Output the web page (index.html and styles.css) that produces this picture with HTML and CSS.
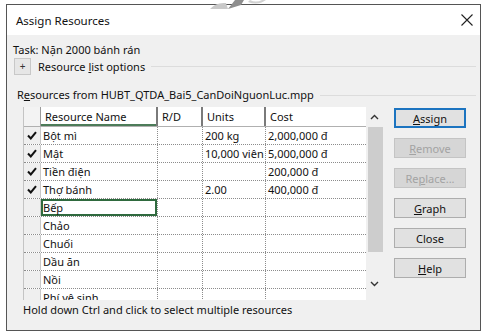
FILE: index.html
```html
<!DOCTYPE html>
<html lang="vi">
<head>
    <meta charset="UTF-8">
    <meta name="viewport" content="width=device-width, initial-scale=1.0">
    <title>Assign Resources</title>
    <link rel="stylesheet" href="styles.css">
</head>
<body>
    <svg class="watermark" width="60" height="9" viewBox="0 0 60 9">
        <path d="M2 9 Q8 2 18 3 L20 9 Z" fill="#c9c9c9"/>
        <path d="M20 9 L27 0 L36 0 L33 5 Z" fill="#8e8e8e"/>
        <path d="M40 2 Q50 6 58 0 L54 0 Q48 3 42 0 Z" fill="#d2d2d2"/>
    </svg>
    <div class="window">
        <div class="titlebar">
            <span class="title">Assign Resources</span>
            <svg class="close" width="12" height="12" viewBox="0 0 12 12">
                <path d="M0.5 0.5 L11.5 11.5 M11.5 0.5 L0.5 11.5" stroke="#222" stroke-width="1.1" fill="none"/>
            </svg>
        </div>
        <div class="content">
            <div class="task">Task: Nặn 2000 bánh rán</div>
            <div class="options">
                <span class="plus">+</span>
                <span class="options-label">Resource <u>l</u>ist options</span>
                <span class="rule"></span>
            </div>
            <div class="source">
                <span>R<u>e</u>sources from HUBT_QTDA_Bai5_CanDoiNguonLuc.mpp</span>
                <span class="rule"></span>
            </div>
            <div class="main">
                <div class="grid-wrap">
                    <div class="grid">
                        <div class="row head">
                            <div class="cell check"></div>
                            <div class="cell name">Resource Name</div>
                            <div class="cell">R/D</div>
                            <div class="cell">Units</div>
                            <div class="cell last">Cost</div>
                        </div>
                        <div class="row">
                            <div class="cell check"><svg width="10" height="9" viewBox="0 0 10 9"><path d="M1 4.5 L3.8 7.5 L9 1.2" stroke="#111" stroke-width="2" fill="none"/></svg></div>
                            <div class="cell">Bột mì</div>
                            <div class="cell"></div>
                            <div class="cell">200 kg</div>
                            <div class="cell last">2,000,000 đ</div>
                        </div>
                        <div class="row">
                            <div class="cell check"><svg width="10" height="9" viewBox="0 0 10 9"><path d="M1 4.5 L3.8 7.5 L9 1.2" stroke="#111" stroke-width="2" fill="none"/></svg></div>
                            <div class="cell">Mật</div>
                            <div class="cell"></div>
                            <div class="cell">10,000 viên</div>
                            <div class="cell last">5,000,000 đ</div>
                        </div>
                        <div class="row">
                            <div class="cell check"><svg width="10" height="9" viewBox="0 0 10 9"><path d="M1 4.5 L3.8 7.5 L9 1.2" stroke="#111" stroke-width="2" fill="none"/></svg></div>
                            <div class="cell">Tiền điện</div>
                            <div class="cell"></div>
                            <div class="cell"></div>
                            <div class="cell last">200,000 đ</div>
                        </div>
                        <div class="row">
                            <div class="cell check"><svg width="10" height="9" viewBox="0 0 10 9"><path d="M1 4.5 L3.8 7.5 L9 1.2" stroke="#111" stroke-width="2" fill="none"/></svg></div>
                            <div class="cell">Thợ bánh</div>
                            <div class="cell"></div>
                            <div class="cell">2.00</div>
                            <div class="cell last">400,000 đ</div>
                        </div>
                        <div class="row">
                            <div class="cell check"></div>
                            <div class="cell selected">Bếp</div>
                            <div class="cell"></div>
                            <div class="cell"></div>
                            <div class="cell last"></div>
                        </div>
                        <div class="row">
                            <div class="cell check"></div>
                            <div class="cell">Chảo</div>
                            <div class="cell"></div>
                            <div class="cell"></div>
                            <div class="cell last"></div>
                        </div>
                        <div class="row">
                            <div class="cell check"></div>
                            <div class="cell">Chuối</div>
                            <div class="cell"></div>
                            <div class="cell"></div>
                            <div class="cell last"></div>
                        </div>
                        <div class="row">
                            <div class="cell check"></div>
                            <div class="cell">Dầu ăn</div>
                            <div class="cell"></div>
                            <div class="cell"></div>
                            <div class="cell last"></div>
                        </div>
                        <div class="row">
                            <div class="cell check"></div>
                            <div class="cell">Nồi</div>
                            <div class="cell"></div>
                            <div class="cell"></div>
                            <div class="cell last"></div>
                        </div>
                        <div class="row partial">
                            <div class="cell check"></div>
                            <div class="cell">Phí vệ sinh</div>
                            <div class="cell"></div>
                            <div class="cell"></div>
                            <div class="cell last"></div>
                        </div>
                    </div>
                    <div class="scrollbar">
                        <div class="arrow">
                            <svg width="9" height="6" viewBox="0 0 9 6"><path d="M1 5 L4.5 1.5 L8 5" stroke="#333" stroke-width="1.4" fill="none"/></svg>
                        </div>
                        <div class="thumb"></div>
                        <div class="track"></div>
                        <div class="arrow down">
                            <svg width="9" height="6" viewBox="0 0 9 6"><path d="M1 1 L4.5 4.5 L8 1" stroke="#333" stroke-width="1.4" fill="none"/></svg>
                        </div>
                    </div>
                </div>
                <div class="buttons">
                    <button class="btn default"><u>A</u>ssign</button>
                    <button class="btn" disabled><u>R</u>emove</button>
                    <button class="btn" disabled>Re<u>p</u>lace...</button>
                    <button class="btn"><u>G</u>raph</button>
                    <button class="btn">Close</button>
                    <button class="btn"><u>H</u>elp</button>
                </div>
            </div>
            <div class="hint">Hold down Ctrl and click to select multiple resources</div>
        </div>
    </div>
</body>
</html>
```

FILE: styles.css
```css
body {
    margin: 0;
    background-color: #ffffff;
    font-family: "Noto Sans", "Open Sans", sans-serif;
    font-size: 11px;
    color: #111;
}

.watermark {
    position: absolute;
    left: 208px;
    top: 0;
}

.window {
    margin: 4px 0 0 6px;
    width: 473px;
    height: 325px;
    border: 1px solid #555;
    background-color: #f0f0f0;
    display: flex;
    flex-direction: column;
}

.titlebar {
    height: 30px;
    background-color: #fff;
    display: flex;
    align-items: center;
    justify-content: space-between;
    padding: 0 7px 0 9px;
}

.title {
    font-size: 11.5px;
}

.content {
    padding: 7px 0 0 6px;
    display: flex;
    flex-direction: column;
}

.task {
    line-height: 16px;
}

.options {
    display: flex;
    align-items: center;
    height: 17px;
    margin-left: 1px;
}

.plus {
    width: 15px;
    height: 15px;
    border: 1px solid #c8c8c8;
    background-color: #e6e6e6;
    font-size: 10px;
    line-height: 15px;
    text-align: center;
    color: #333;
}

.options-label {
    margin-left: 7px;
}

.rule {
    flex: 1;
    height: 1px;
    background-color: #dcdcdc;
    margin: 0 4px 0 6px;
}

.source {
    display: flex;
    align-items: center;
    line-height: 16px;
    margin: 12px 0 0 4px;
}

.main {
    display: flex;
    margin: 4px 0 0 10px;
}

.grid-wrap {
    display: flex;
    width: 359px;
    height: 193px;
    overflow: hidden;
    background-color: #fff;
    border-left: 1px solid #c4c4c4;
}

.grid {
    width: 342px;
}

.row {
    display: grid;
    grid-template-columns: 17px 117px 45px 63px 100px;
    height: 18px;
    border-bottom: 1px dotted #8c8c8c;
    box-sizing: border-box;
}

.row.head {
    height: 20px;
    border-bottom: 1px solid #b0b0b0;
}

.row.partial {
    height: 12px;
    border-bottom: none;
}

.cell {
    border-right: 1px dotted #8c8c8c;
    padding-left: 2px;
    line-height: 17px;
    white-space: nowrap;
    overflow: hidden;
}

.cell.last {
    border-right: none;
}

.head .cell {
    border-right: 2px solid #7a7a7a;
    line-height: 19px;
    padding-left: 4px;
}

.head .cell.last {
    border-right: none;
}

.head .cell.name {
    box-shadow: inset 0 -2px 0 #4d7c59;
}

.cell.check {
    background-color: #efefef;
    border-right: 1px solid #c8c8c8;
    padding-left: 0;
    display: flex;
    align-items: center;
    justify-content: center;
}

.head .cell.check {
    background-color: #f3f3f3;
    border-right: 1px solid #9a9a9a;
}

.cell.selected {
    box-shadow: inset 0 0 0 2px #2f6a3e;
}

.scrollbar {
    width: 17px;
    background-color: #f0f0f0;
    display: flex;
    flex-direction: column;
}

.arrow {
    height: 20px;
    display: flex;
    align-items: center;
    justify-content: center;
}

.arrow.down {
    height: 22px;
    align-items: flex-start;
    padding-top: 3px;
    box-sizing: border-box;
}

.thumb {
    height: 125px;
    margin-left: 2px;
    background-color: #cdcdcd;
}

.track {
    flex: 1;
}

.buttons {
    margin: 1px 0 0 11px;
    display: flex;
    flex-direction: column;
    gap: 10px;
}

.btn {
    width: 72px;
    height: 20px;
    padding: 0;
    font-family: "Noto Sans", "Open Sans", sans-serif;
    font-size: 11px;
    color: #111;
    background-color: #e1e1e1;
    border: 1px solid #adadad;
}

.btn.default {
    border: 2px solid #1c74c0;
}

.btn:disabled {
    color: #a3a3a3;
    background-color: #d6d6d6;
    border-color: #c4c4c4;
}

.hint {
    margin: 2px 0 0 10px;
    line-height: 16px;
}
```
